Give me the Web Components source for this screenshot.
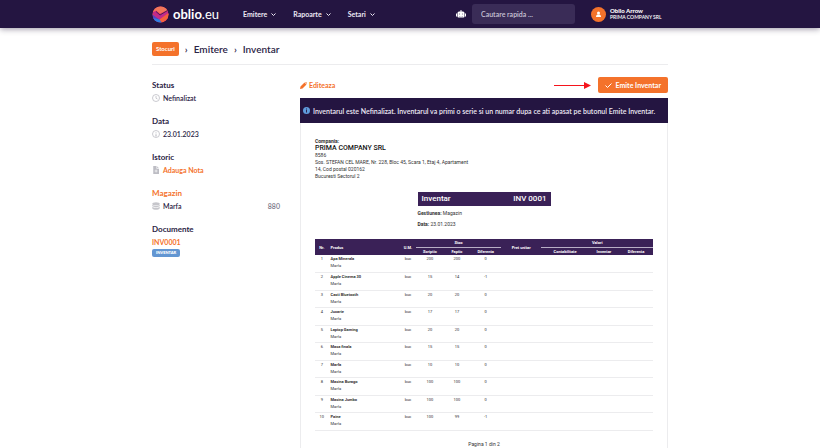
<!DOCTYPE html>
<html lang="ro">
<head>
<meta charset="utf-8">
<meta name="viewport" content="width=device-width, initial-scale=1">
<title>Inventar - oblio.eu</title>
<style>
    html {
        --ink: #2b2445;
        --orange: #f4722b;
        --navy: #241541;
        --plum: #3a2157;
        --line: #ececee;
    }

    body {
        margin: 0;
        min-height: 100vh;
        display: flex;
        flex-direction: column;
        background: #fff;
        color: var(--ink);
        font: 600 7px/10px Lato, sans-serif;
    }
</style>
</head>
<body>
<app-header></app-header>
<page-layout>
    <page-trail slot="trail"></page-trail>
    <side-panel slot="side">
        <side-group label="Status"><side-item icon="clock">Nefinalizat</side-item></side-group>
        <side-group label="Data"><side-item icon="info">23.01.2023</side-item></side-group>
        <side-group label="Istoric"><side-item icon="note" link>Adauga Nota</side-item></side-group>
        <side-group label="Magazin" accent><side-item icon="stack" count="880">Marfa</side-item></side-group>
        <side-group label="Documente"><doc-link tag="INVENTAR">INV0001</doc-link></side-group>
    </side-panel>
    <doc-toolbar></doc-toolbar>
    <info-bar>Inventarul este Nefinalizat. Inventarul va primi o serie si un numar dupa ce ati apasat pe butonul Emite Inventar.</info-bar>
    <inventory-sheet></inventory-sheet>
</page-layout>

<script>
const icons = {
    clock: `<svg viewBox="0 0 16 16" width="8" height="8" fill="none" stroke="#bdbdc4" stroke-width="1.6"><circle cx="8" cy="8" r="7"/><path d="M8 4v4.5l3 1.5"/></svg>`,
    info: `<svg viewBox="0 0 16 16" width="8" height="8" fill="none" stroke="#bdbdc4" stroke-width="1.6"><circle cx="8" cy="8" r="7"/><path d="M8 7v5M8 4v1.6M6.6 12h2.8"/></svg>`,
    note: `<svg viewBox="0 0 16 16" width="8" height="8"><path fill="#bdbdc4" d="M2.500 0h7L14 4.500V16H2.500z"/><path fill="none" stroke="#fff" stroke-width="1.3" d="M9.500 0v5H14M8.200 7v6M5.200 10h6"/></svg>`,
    stack: `<svg viewBox="0 0 16 16" width="8" height="8" fill="#c6c6cb"><ellipse cx="8" cy="3.500" rx="7.500" ry="3.200"/><path d="M.5 5.500c2 2.600 13 2.600 15 0v2.600c-2 3-13 3-15 0zM.5 9.600c2 2.600 13 2.600 15 0v2.800c-2 4.200-13 4.200-15 0z"/></svg>`,
    chevron: `<svg viewBox="0 0 10 10" width="5" height="5" fill="none" stroke="currentColor" stroke-width="2"><path d="M1 3l4 4 4-4"/></svg>`
};

class AppHeader extends HTMLElement {
    constructor() {
        super();
        this.attachShadow({ mode: 'open' });
    }

    connectedCallback() {
        this.render();
    }

    render() {
        const menu = ['Emitere', 'Rapoarte', 'Setari'];
        this.shadowRoot.innerHTML = `
            <style>
                :host {
                    display: block;
                    background: var(--navy);
                    color: #fff;
                    box-shadow: 0 1px 6px rgba(30, 20, 50, 0.45);
                }

                .bar {
                    max-width: 516px;
                    height: 28px;
                    margin: 0 auto;
                    display: flex;
                    align-items: center;
                }

                a {
                    color: inherit;
                    text-decoration: none;
                }

                .logo {
                    display: flex;
                    align-items: center;
                    gap: 4px;
                    margin-right: 24px;
                    font: 400 13px/16px Lato, sans-serif;
                }

                .logo b {
                    font-weight: 700;
                }

                nav {
                    display: flex;
                    gap: 17px;
                    flex: 1;
                }

                nav button {
                    display: flex;
                    align-items: center;
                    gap: 4px;
                    padding: 0;
                    border: 0;
                    background: none;
                    color: #ece8f4;
                    font: inherit;
                    font-weight: 700;
                }

                .bot {
                    display: block;
                    margin-right: 6px;
                }

                input {
                    width: 103px;
                    height: 20px;
                    box-sizing: border-box;
                    margin: 0 16px 0 0;
                    padding: 0 9px;
                    border: 0;
                    border-radius: 3px;
                    background: #3a2c57;
                    color: #fff;
                    font: inherit;
                }

                input::placeholder {
                    color: #c9c3d6;
                    opacity: 1;
                }

                .user {
                    display: flex;
                    align-items: center;
                    gap: 4px;
                    width: 77px;
                    white-space: nowrap;
                    font-size: 5px;
                    line-height: 7px;
                }

                .user b {
                    display: block;
                    font-size: 6px;
                }

                .user svg {
                    flex: none;
                }
            </style>
            <div class="bar">
                <a class="logo" href="#">
                    <svg width="17" height="17" viewBox="0 0 34 34" aria-hidden="true">
                        <defs><clipPath id="ball"><circle cx="17" cy="17" r="16"/></clipPath></defs>
                        <g clip-path="url(#ball)">
                            <rect width="34" height="34" fill="#e6355c"/>
                            <path fill="#f2765a" d="M0 0h34v7L16 15 8 9 0 16z"/>
                            <path fill="#c22a8b" d="M0 13l8-3 8 8 18-9v7L15 27z"/>
                            <path fill="#f4603e" d="M15 27L34 13v11L20 34z"/>
                            <path fill="#5b3fc4" d="M0 16l15 11-4 7H0z"/>
                            <path fill="#2f7de0" d="M2 24l13 3 5 7H6z"/>
                            <path fill="none" stroke="#4a1c5c" stroke-width="2" d="M8 11l8 7L31 9"/>
                        </g>
                    </svg>
                    <span><b>oblio</b>.eu</span>
                </a>
                <nav>${menu.map(m => `<button type="button">${m}${icons.chevron}</button>`).join('')}</nav>
                <svg class="bot" width="10" height="8" viewBox="0 0 20 16" aria-hidden="true">
                    <path fill="#fff" d="M9 0h2v3h3a3 3 0 0 1 3 3v7a2 2 0 0 1-2 2H5a2 2 0 0 1-2-2V6a3 3 0 0 1 3-3h3zM0 7h2v6H0zM18 7h2v6h-2z"/>
                    <path fill="#8a819c" d="M6 7h2v2H6zM12 7h2v2h-2zM6 12h2v1H6zM9 12h2v1H9zM12 12h2v1h-2z"/>
                </svg>
                <input type="search" placeholder="Cautare rapida ..." aria-label="Cautare rapida">
                <a class="user" href="#">
                    <svg width="15" height="15" viewBox="0 0 30 30" aria-hidden="true">
                        <circle cx="15" cy="15" r="15" fill="#f4722b"/>
                        <circle cx="15" cy="12" r="3" fill="#fff"/>
                        <path fill="#fff" d="M10 20c0-4 2-5 5-5s5 1 5 5z"/>
                    </svg>
                    <span><b>Oblio Arrow</b>PRIMA COMPANY SRL</span>
                </a>
            </div>
        `;
    }
}

class PageLayout extends HTMLElement {
    constructor() {
        super();
        this.attachShadow({ mode: 'open' });
        this.shadowRoot.innerHTML = `
            <style>
                :host {
                    box-sizing: border-box;
                    width: 100%;
                    max-width: 516px;
                    margin: 0 auto;
                    flex: 1;
                    display: flex;
                    flex-direction: column;
                }

                .columns {
                    flex: 1;
                    display: grid;
                    grid-template-columns: 128fr 368fr;
                    gap: 20px;
                }

                main {
                    display: flex;
                    flex-direction: column;
                    padding-top: 12px;
                }
            </style>
            <slot name="trail"></slot>
            <div class="columns">
                <slot name="side"></slot>
                <main><slot></slot></main>
            </div>
        `;
    }
}

class PageTrail extends HTMLElement {
    constructor() {
        super();
        this.attachShadow({ mode: 'open' });
        this.shadowRoot.innerHTML = `
            <style>
                :host {
                    display: flex;
                    align-items: center;
                    gap: 6px;
                    padding: 14px 0 8px;
                    border-bottom: 1px solid var(--line);
                    font-size: 10px;
                    line-height: 14px;
                }

                a {
                    color: inherit;
                    text-decoration: none;
                }

                .home {
                    padding: 0 4px;
                    border-radius: 2px;
                    background: var(--orange);
                    color: #fff;
                    font-size: 6px;
                    font-weight: 700;
                }
            </style>
            <a class="home" href="#">Stocuri</a>
            <span>›</span>
            <a href="#">Emitere</a>
            <span>›</span>
            <span>Inventar</span>
        `;
    }
}

class SidePanel extends HTMLElement {
    constructor() {
        super();
        this.attachShadow({ mode: 'open' });
        this.shadowRoot.innerHTML = `
            <style>
                :host {
                    display: flex;
                    flex-direction: column;
                    gap: 13px;
                    padding-top: 15px;
                }
            </style>
            <slot></slot>
        `;
    }
}

class SideGroup extends HTMLElement {
    constructor() {
        super();
        this.attachShadow({ mode: 'open' });
    }

    connectedCallback() {
        this.shadowRoot.innerHTML = `
            <style>
                :host {
                    display: flex;
                    flex-direction: column;
                    gap: 3px;
                }

                h3 {
                    margin: 0;
                    font-size: 8px;
                    font-weight: 700;
                    line-height: 10px;
                }

                :host([accent]) h3 {
                    color: var(--orange);
                }
            </style>
            <h3>${this.getAttribute('label')}</h3>
            <slot></slot>
        `;
    }
}

class SideItem extends HTMLElement {
    constructor() {
        super();
        this.attachShadow({ mode: 'open' });
    }

    connectedCallback() {
        const isLink = this.hasAttribute('link');
        this.shadowRoot.innerHTML = `
            <style>
                :host {
                    display: flex;
                    align-items: center;
                    gap: 3px;
                }

                a {
                    color: var(--orange);
                    font-weight: 700;
                    text-decoration: none;
                }

                .count {
                    margin-left: auto;
                    color: #7b788a;
                }
            </style>
            ${icons[this.getAttribute('icon')]}
            ${isLink ? '<a href="#"><slot></slot></a>' : '<span><slot></slot></span>'}
            ${this.hasAttribute('count') ? `<span class="count">${this.getAttribute('count')}</span>` : ''}
        `;
    }
}

class DocLink extends HTMLElement {
    constructor() {
        super();
        this.attachShadow({ mode: 'open' });
    }

    connectedCallback() {
        this.shadowRoot.innerHTML = `
            <style>
                :host {
                    display: flex;
                    flex-direction: column;
                    align-items: flex-start;
                    gap: 2px;
                }

                a {
                    color: var(--orange);
                    font-weight: 700;
                    text-decoration: none;
                }

                .tag {
                    padding: 0 4px;
                    border-radius: 2px;
                    background: #6296d2;
                    color: #fff;
                    font-size: 4px;
                    font-weight: 800;
                    line-height: 8px;
                }
            </style>
            <a href="#"><slot></slot></a>
            <span class="tag">${this.getAttribute('tag')}</span>
        `;
    }
}

class DocToolbar extends HTMLElement {
    constructor() {
        super();
        this.attachShadow({ mode: 'open' });
        this.shadowRoot.innerHTML = `
            <style>
                :host {
                    display: flex;
                    align-items: center;
                    gap: 7px;
                    margin-bottom: 5px;
                }

                a {
                    display: flex;
                    align-items: center;
                    gap: 2px;
                    margin-right: auto;
                    color: var(--orange);
                    font-weight: 700;
                    text-decoration: none;
                }

                button {
                    display: flex;
                    align-items: center;
                    gap: 4px;
                    height: 16px;
                    padding: 0 7px;
                    border: 0;
                    border-radius: 2px;
                    background: var(--orange);
                    color: #fff;
                    font: inherit;
                    font-weight: 700;
                }
            </style>
            <a href="#">
                <svg width="7" height="7" viewBox="0 0 14 14" fill="currentColor" aria-hidden="true"><path d="M0 14l1-5L9 1l4 4-8 8zM10 0h2l2 2v2z"/></svg>
                Editeaza
            </a>
            <svg width="37" height="8" viewBox="0 0 37 8" aria-hidden="true"><path d="M0 4.500h31" stroke="#f5141c" stroke-width="1"/><path d="M30 1L37 4.500 30 8z" fill="#f5141c"/></svg>
            <button type="button">
                <svg width="7" height="7" viewBox="0 0 14 14" fill="none" stroke="#fff" stroke-width="2" aria-hidden="true"><path d="M1 7l4 4 8-8"/></svg>
                Emite Inventar
            </button>
        `;
    }
}

class InfoBar extends HTMLElement {
    constructor() {
        super();
        this.attachShadow({ mode: 'open' });
        this.shadowRoot.innerHTML = `
            <style>
                :host {
                    display: flex;
                    align-items: center;
                    gap: 3px;
                    min-height: 25px;
                    padding: 0 3px;
                    background: var(--navy);
                    color: #ece8f4;
                }

                svg {
                    flex: none;
                }
            </style>
            <svg width="7" height="7" viewBox="0 0 14 14" aria-hidden="true"><circle cx="7" cy="7" r="7" fill="#5f9bdc"/><path stroke="#241541" stroke-width="1.800" d="M7 6v5M7 3v2"/></svg>
            <span><slot></slot></span>
        `;
    }
}

class InventorySheet extends HTMLElement {
    constructor() {
        super();
        this.attachShadow({ mode: 'open' });
        // name, scriptic, faptic, diferenta
        this.rows = [
            ['Apa Minerala', 200, 200, 0],
            ['Apple Cinema 30', 15, 14, -1],
            ['Casti Bluetooth', 20, 20, 0],
            ['Jucarie', 17, 17, 0],
            ['Laptop Gaming', 20, 20, 0],
            ['Masa finala', 15, 15, 0],
            ['Marfa', 10, 10, 0],
            ['Masina Burago', 100, 100, 0],
            ['Masina Jumbo', 100, 100, 0],
            ['Paine', 100, 99, -1]
        ];
    }

    connectedCallback() {
        this.render();
    }

    renderRow([name, booked, counted, diff], i) {
        return `
            <tr>
                <td>${i + 1}</td>
                <td class="name"><b>${name}</b><br>Marfa</td>
                <td>buc</td>
                <td>${booked}</td>
                <td>${counted}</td>
                <td>${diff}</td>
                <td></td>
                <td></td>
                <td></td>
                <td></td>
            </tr>`;
    }

    render() {
        const widths = [4, 21, 5, 8, 8, 9, 12, 14, 9, 10];
        this.shadowRoot.innerHTML = `
            <style>
                :host {
                    flex: 1;
                    display: flex;
                    flex-direction: column;
                    padding: 15px 14px 0;
                    border: 1px solid var(--line);
                    border-width: 0 1px;
                    color: #333;
                    font: 400 5px/7px Roboto, sans-serif;
                }

                address {
                    width: 160px;
                    font-style: normal;
                }

                address strong {
                    display: block;
                    font-size: 7px;
                    font-weight: 500;
                    color: #111;
                }

                .title {
                    width: 133px;
                    margin: 12px auto 0;
                    display: flex;
                    flex-direction: column;
                    gap: 4px;
                }

                h1 {
                    display: flex;
                    justify-content: space-between;
                    margin: 0;
                    padding: 0 4px;
                    background: var(--plum);
                    color: #fff;
                    font-size: 8px;
                    font-weight: 500;
                    line-height: 14px;
                }

                p {
                    margin: 0;
                }

                table {
                    width: 100%;
                    margin-top: 11px;
                    border-collapse: collapse;
                    table-layout: fixed;
                    font-size: 4px;
                    line-height: 7px;
                    text-align: center;
                }

                th {
                    height: 8px;
                    box-sizing: border-box;
                    padding: 0;
                    background: var(--plum);
                    color: #fff;
                    font-weight: 700;
                }

                th[colspan] {
                    border-bottom: 1px solid #b8aec6;
                }

                td {
                    height: 17px;
                    box-sizing: border-box;
                    padding: 0;
                    border-bottom: 1px solid var(--line);
                    vertical-align: top;
                }

                tbody tr:nth-child(even) td {
                    height: 18px;
                }

                .name {
                    padding-left: 2px;
                    text-align: left;
                }

                footer {
                    margin-top: 10px;
                    text-align: center;
                }
            </style>
            <address>
                <b>Compania:</b>
                <strong>PRIMA COMPANY SRL</strong>
                8586<br>
                Sos. STEFAN CEL MARE, Nr. 228, Bloc 45, Scara 1, Etaj 4, Apartament 14, Cod postal 020162<br>
                Bucuresti Sectorul 2
            </address>
            <div class="title">
                <h1><span>Inventar</span><span>INV 0001</span></h1>
                <p><b>Gestiunea:</b> Magazin</p>
                <p><b>Data:</b> 23.01.2023</p>
            </div>
            <table>
                <colgroup>${widths.map(w => `<col style="width: ${w}%">`).join('')}</colgroup>
                <thead>
                    <tr>
                        <th rowspan="2">Nr.</th>
                        <th rowspan="2" class="name">Produs</th>
                        <th rowspan="2">U.M.</th>
                        <th colspan="3">Stoc</th>
                        <th rowspan="2">Pret unitar</th>
                        <th colspan="3">Valori</th>
                    </tr>
                    <tr>
                        <th>Scriptic</th>
                        <th>Faptic</th>
                        <th>Diferenta</th>
                        <th>Contabilitate</th>
                        <th>Inventar</th>
                        <th>Diferenta</th>
                    </tr>
                </thead>
                <tbody>${this.rows.map((row, i) => this.renderRow(row, i)).join('')}</tbody>
            </table>
            <footer>Pagina 1 din 2</footer>
        `;
    }
}

customElements.define('app-header', AppHeader);
customElements.define('page-layout', PageLayout);
customElements.define('page-trail', PageTrail);
customElements.define('side-panel', SidePanel);
customElements.define('side-group', SideGroup);
customElements.define('side-item', SideItem);
customElements.define('doc-link', DocLink);
customElements.define('doc-toolbar', DocToolbar);
customElements.define('info-bar', InfoBar);
customElements.define('inventory-sheet', InventorySheet);
</script>
</body>
</html>
